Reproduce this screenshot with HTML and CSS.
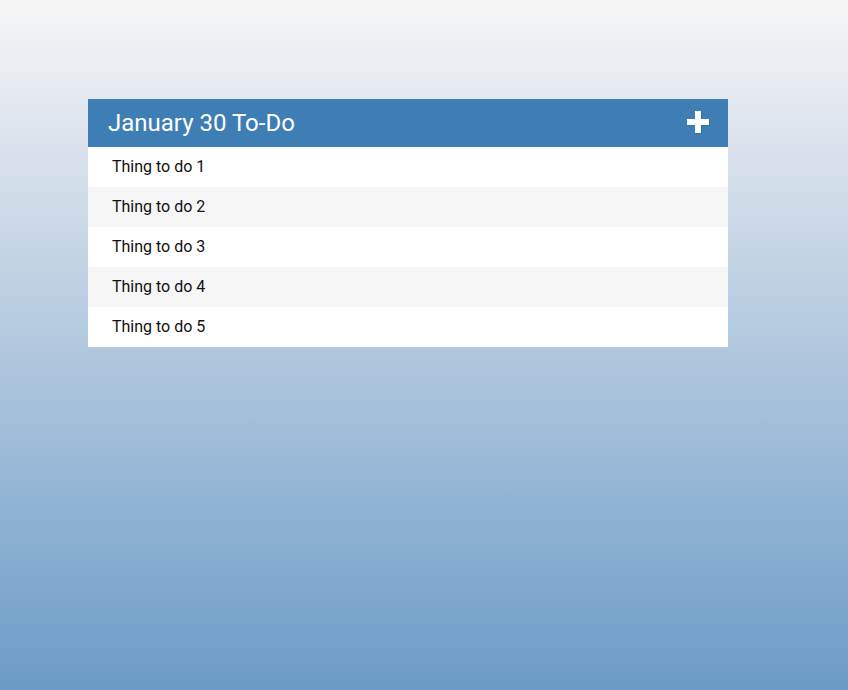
FILE: index.html
```html
<!DOCTYPE html>
<html>
<head>
<meta charset="utf-8">
<link rel="stylesheet" href="styles.css">
</head>
<body>
<div class="page">
  <section class="card">
    <header class="card-head">
      <h1 class="title">January 30 To-Do</h1>
      <span class="add" aria-label="Add">
        <svg width="24" height="24" viewBox="0 0 24 24">
          <path d="M9 1h6v8h8v6h-8v8h-6v-8h-8v-6h8z" fill="#2d6393" transform="translate(0.6,0.6)"/>
          <path d="M9 1h6v8h8v6h-8v8h-6v-8h-8v-6h8z" fill="#fff"/>
        </svg>
      </span>
    </header>
    <ul class="list">
      <li class="item">Thing to do 1</li>
      <li class="item">Thing to do 2</li>
      <li class="item">Thing to do 3</li>
      <li class="item">Thing to do 4</li>
      <li class="item">Thing to do 5</li>
    </ul>
  </section>
</div>
</body>
</html>
```
FILE: styles.css
```css
html, body {
  margin: 0;
  padding: 0;
}
body {
  min-height: 690px;
  background: linear-gradient(to bottom, #f6f6f6 0%, #e3e8ef 15%, #6b9bc6 100%);
  font-family: Roboto, "Liberation Sans", sans-serif;
}
.page {
  padding: 99px 0 0 88px;
}
.card {
  width: 640px;
  background: #fff;
}
.card-head {
  height: 48px;
  background: #3e7eb4;
  display: flex;
  align-items: center;
  justify-content: space-between;
  padding: 0 20px;
  box-sizing: border-box;
}
.title {
  margin: 0;
  font-size: 24px;
  font-weight: 400;
  color: #fff;
  line-height: 48px;
}
.add {
  display: flex;
  width: 24px;
  height: 24px;
  margin-right: -2px;
  margin-top: -2px;
}
.list {
  list-style: none;
  margin: 0;
  padding: 0;
}
.item {
  height: 40px;
  line-height: 40px;
  padding-left: 24px;
  font-size: 16px;
  color: #111;
}
.item:nth-child(even) {
  background: #f6f6f6;
}
```
